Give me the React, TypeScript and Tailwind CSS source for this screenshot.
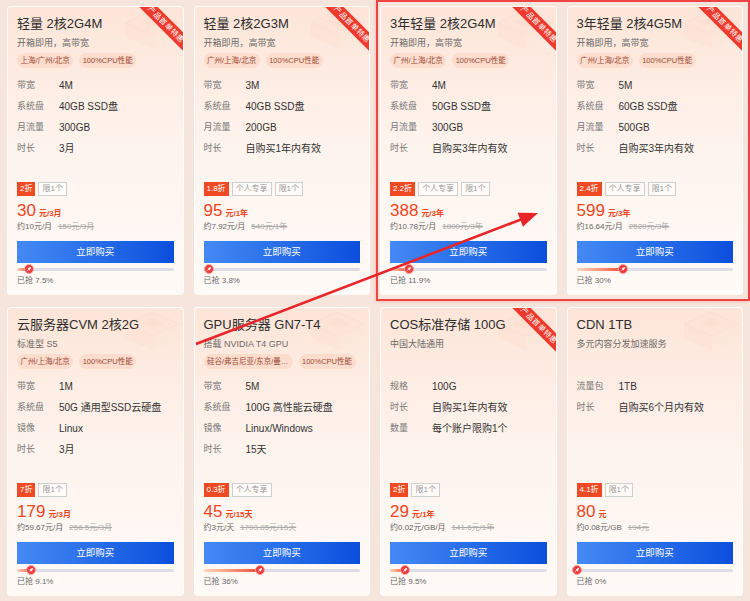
import React from "react";

type Card = {
  title: string;
  sub: string;
  tags: string[];
  specs: [string, string][];
  badges: string[];
  price: string;
  unit: string;
  approx: string;
  orig: string;
  pct: number;
  pctText: string;
  ribbon: boolean;
};

const cards: Card[] = [
  {
    title: "轻量 2核2G4M",
    sub: "开箱即用，高带宽",
    tags: ["上海/广州/北京", "100%CPU性能"],
    specs: [["带宽", "4M"], ["系统盘", "40GB SSD盘"], ["月流量", "300GB"], ["时长", "3月"]],
    badges: ["2折", "限1个"],
    price: "30",
    unit: "元/3月",
    approx: "约10元/月",
    orig: "150元/3月",
    pct: 7.5,
    pctText: "7.5%",
    ribbon: true,
  },
  {
    title: "轻量 2核2G3M",
    sub: "开箱即用，高带宽",
    tags: ["广州/上海/北京", "100%CPU性能"],
    specs: [["带宽", "3M"], ["系统盘", "40GB SSD盘"], ["月流量", "200GB"], ["时长", "自购买1年内有效"]],
    badges: ["1.8折", "个人专享", "限1个"],
    price: "95",
    unit: "元/1年",
    approx: "约7.92元/月",
    orig: "540元/1年",
    pct: 3.8,
    pctText: "3.8%",
    ribbon: true,
  },
  {
    title: "3年轻量 2核2G4M",
    sub: "开箱即用，高带宽",
    tags: ["广州/上海/北京", "100%CPU性能"],
    specs: [["带宽", "4M"], ["系统盘", "50GB SSD盘"], ["月流量", "300GB"], ["时长", "自购买3年内有效"]],
    badges: ["2.2折", "个人专享", "限1个"],
    price: "388",
    unit: "元/3年",
    approx: "约10.78元/月",
    orig: "1800元/3年",
    pct: 11.9,
    pctText: "11.9%",
    ribbon: true,
  },
  {
    title: "3年轻量 2核4G5M",
    sub: "开箱即用，高带宽",
    tags: ["广州/上海/北京", "100%CPU性能"],
    specs: [["带宽", "5M"], ["系统盘", "60GB SSD盘"], ["月流量", "500GB"], ["时长", "自购买3年内有效"]],
    badges: ["2.4折", "个人专享", "限1个"],
    price: "599",
    unit: "元/3年",
    approx: "约16.64元/月",
    orig: "2520元/3年",
    pct: 30,
    pctText: "30%",
    ribbon: true,
  },
  {
    title: "云服务器CVM 2核2G",
    sub: "标准型 S5",
    tags: ["广州/上海/北京", "100%CPU性能"],
    specs: [["带宽", "1M"], ["系统盘", "50G 通用型SSD云硬盘"], ["镜像", "Linux"], ["时长", "3月"]],
    badges: ["7折", "限1个"],
    price: "179",
    unit: "元/3月",
    approx: "约59.67元/月",
    orig: "256.5元/3月",
    pct: 9.1,
    pctText: "9.1%",
    ribbon: false,
  },
  {
    title: "GPU服务器 GN7-T4",
    sub: "搭载 NVIDIA T4 GPU",
    tags: ["硅谷/弗吉尼亚/东京/曼谷/首尔", "100%CPU性能"],
    specs: [["带宽", "5M"], ["系统盘", "100G 高性能云硬盘"], ["镜像", "Linux/Windows"], ["时长", "15天"]],
    badges: ["0.3折", "个人专享"],
    price: "45",
    unit: "元/15天",
    approx: "约3元/天",
    orig: "1793.85元/15天",
    pct: 36,
    pctText: "36%",
    ribbon: false,
  },
  {
    title: "COS标准存储 100G",
    sub: "中国大陆通用",
    tags: [],
    specs: [["规格", "100G"], ["时长", "自购买1年内有效"], ["数量", "每个账户限购1个"]],
    badges: ["2折", "限1个"],
    price: "29",
    unit: "元/1年",
    approx: "约0.02元/GB/月",
    orig: "141.6元/1年",
    pct: 9.5,
    pctText: "9.5%",
    ribbon: true,
  },
  {
    title: "CDN 1TB",
    sub: "多元内容分发加速服务",
    tags: [],
    specs: [["流量包", "1TB"], ["时长", "自购买6个月内有效"]],
    badges: ["4.1折", "限1个"],
    price: "80",
    unit: "元",
    approx: "约0.08元/GB",
    orig: "194元",
    pct: 0,
    pctText: "0%",
    ribbon: false,
  },
];

function Deco() {
  return (
    <svg
      className="absolute right-0 top-0 w-[72px] h-[62px] pointer-events-none opacity-50"
      viewBox="0 0 72 62"
    >
      <path d="M14 16 L40 4 L68 16 L42 28 Z" fill="#fde2d4" stroke="#f9d6c4" strokeWidth="1" />
      <path d="M14 16 L14 30 L42 42 L42 28 Z" fill="#fcdccc" opacity="0.8" />
      <path d="M42 28 L68 16 L68 30 L42 42 Z" fill="#fbe4d8" opacity="0.8" />
      <path d="M30 15 L41 10 L53 15 L42 20 Z" fill="#fbd6c3" opacity="0.7" />
    </svg>
  );
}

function Ribbon() {
  return (
    <div className="absolute top-0 right-0 w-[52px] h-[52px] overflow-hidden pointer-events-none">
      <div className="absolute left-[-5px] top-[11px] w-[80px] h-[13px] rotate-45 bg-[#ee3a2c] text-white text-[7.5px] leading-[13px] text-center tracking-[0.5px]">
        产品首单特惠
      </div>
    </div>
  );
}

function Rocket() {
  return (
    <svg viewBox="0 0 10 10" className="w-[6px] h-[6px]">
      <path d="M8.5 1.5 C6 1.5 4 3 3 5 L5 7 C7 6 8.5 4 8.5 1.5 Z" fill="white" />
      <path d="M3 5 L1.5 5.5 L2.5 4 Z M5 7 L4.5 8.5 L6 7.5 Z" fill="white" />
      <path d="M3.2 6.8 L1.5 8.5" stroke="white" strokeWidth="0.9" strokeLinecap="round" />
    </svg>
  );
}

function ProductCard({ c }: { c: Card }) {
  return (
    <div className="relative h-[289px] rounded-[4px] border border-white/80 bg-gradient-to-b from-[#fde5d8] via-[#fef4ee] to-[#fffaf7] px-[9px] flex flex-col overflow-hidden">
      <Deco />
      {c.ribbon && <Ribbon />}
      <div className="relative pt-[8px] text-[13px] leading-[18px] text-[#2d2d2d] whitespace-nowrap">
        {c.title}
      </div>
      <div className="relative mt-[4px] text-[9px] leading-[12px] text-[#6b6b6b] whitespace-nowrap">
        {c.sub}
      </div>
      <div className="relative mt-[4px] flex gap-[6px] h-[15px]">
        {c.tags.map((t, i) => (
          <span
            key={i}
            className="h-[15px] rounded-full bg-[#fcdccd] text-[#9b4a34] text-[7.5px] leading-[15px] px-[3.5px] whitespace-nowrap overflow-hidden text-ellipsis max-w-[89px]"
          >
            {t}
          </span>
        ))}
      </div>
      <div className="relative mt-[7px]">
        {c.specs.map(([k, v], i) => (
          <div key={i} className="flex items-center h-[21px]">
            <span className="w-[42px] text-[9px] text-[#777] shrink-0">{k}</span>
            <span className="text-[10px] text-[#333] whitespace-nowrap">{v}</span>
          </div>
        ))}
      </div>
      <div className="relative mt-auto pb-[7px]">
        <div className="flex gap-[3px] h-[14px]">
          {c.badges.map((b, i) =>
            i === 0 ? (
              <span
                key={i}
                className="h-[14px] bg-[#ef4a23] text-white text-[8px] leading-[14px] px-[3px]"
              >
                {b}
              </span>
            ) : (
              <span
                key={i}
                className="h-[14px] border border-[#cfcfcf] bg-white/60 text-[#999] text-[8px] leading-[12px] px-[3px]"
              >
                {b}
              </span>
            )
          )}
        </div>
        <div className="mt-[5px] h-[20px] flex items-baseline text-[#f1441d] leading-[20px]">
          <span className="text-[17px]">{c.price}</span>
          <span className="ml-[3px] text-[8px] font-bold">{c.unit}</span>
        </div>
        <div className="h-[12px] leading-[12px] text-[8px] whitespace-nowrap">
          <span className="text-[#666]">{c.approx}</span>
          <span className="ml-[6px] text-[#aaa] line-through">{c.orig}</span>
        </div>
        <div className="mt-[8px] h-[22px] bg-gradient-to-r from-[#4489f4] to-[#0a4edc] text-white text-[9.5px] flex items-center justify-center">
          立即购买
        </div>
        <div className="relative mt-[1px] h-[10px]">
          <div className="absolute left-0 right-0 top-[3.5px] h-[3px] rounded-full bg-[#dedfe6]" />
          <div
            className="absolute left-0 top-[3.5px] h-[3px] rounded-full bg-gradient-to-r from-[#fcd6bb] to-[#ef4434]"
            style={{ width: `${c.pct}%` }}
          />
          <div
            className="absolute top-0 w-[10px] h-[10px] -ml-[5px] rounded-full bg-[#ee3b3b] border border-[#f9a4a4] flex items-center justify-center"
            style={{ left: `${c.pct}%` }}
          >
            <Rocket />
          </div>
        </div>
        <div className="h-[13px] leading-[13px] text-[8px] text-[#666]">已抢 {c.pctText}</div>
      </div>
    </div>
  );
}

export default function App() {
  const tip = { x: 538, y: 213 };
  const start = { x: 196, y: 344 };
  const dx = tip.x - start.x;
  const dy = tip.y - start.y;
  const len = Math.sqrt(dx * dx + dy * dy);
  const ux = dx / len;
  const uy = dy / len;
  const hl = 19;
  const hw = 7.5;
  const bx = tip.x - ux * hl;
  const by = tip.y - uy * hl;
  const p1 = `${bx - uy * hw},${by + ux * hw}`;
  const p2 = `${bx + uy * hw},${by - ux * hw}`;
  const lx = tip.x - ux * (hl - 4);
  const ly = tip.y - uy * (hl - 4);

  return (
    <div
      className="relative w-[750px] h-[601px] bg-[#f5e5dc] overflow-hidden"
      style={{ fontFamily: '"Liberation Sans", "Noto Sans CJK SC", sans-serif' }}
    >
      <div className="grid grid-cols-4 gap-x-[10px] gap-y-[12px] px-[7px] pt-[6px]">
        {cards.map((c, i) => (
          <ProductCard key={i} c={c} />
        ))}
      </div>
      <div className="absolute left-[376px] top-0 w-[374px] h-[301px] border-2 border-[#ef4444] shadow-[0_0_3px_rgba(239,68,68,0.4)] pointer-events-none" />
      <svg className="absolute left-0 top-0 w-[750px] h-[601px] pointer-events-none" viewBox="0 0 750 601">
        <line x1={start.x} y1={start.y} x2={lx} y2={ly} stroke="#e8262a" strokeWidth="2.6" />
        <polygon points={`${tip.x},${tip.y} ${p1} ${p2}`} fill="#e8262a" />
      </svg>
    </div>
  );
}
